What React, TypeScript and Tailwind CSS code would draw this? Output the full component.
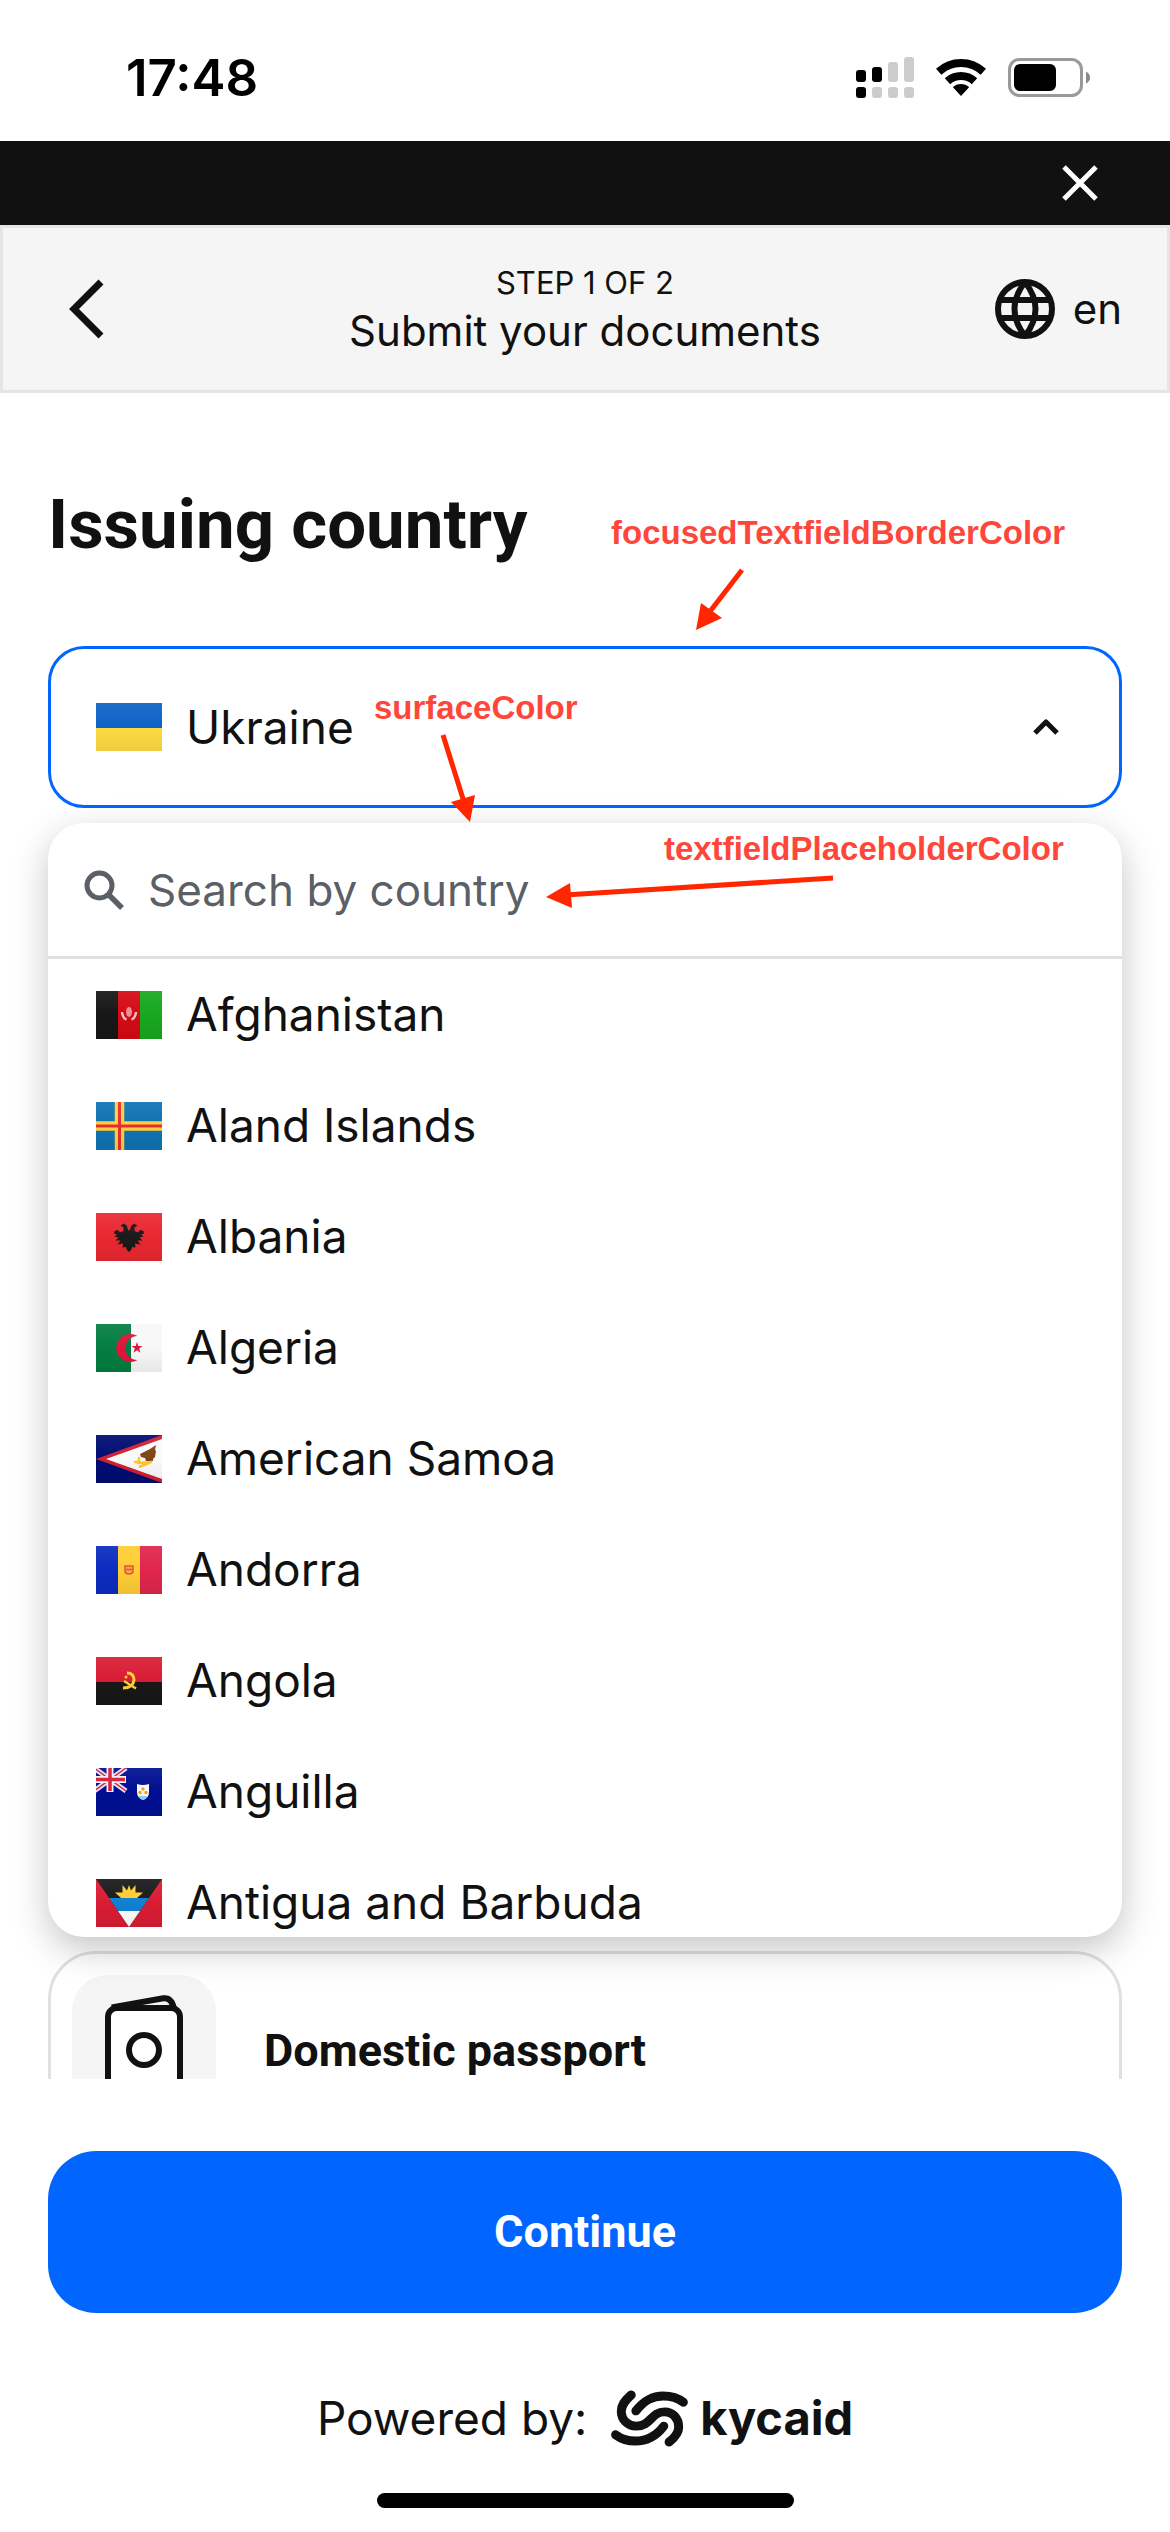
import type { ReactNode } from "react";

const sans = "font-['Inter',sans-serif]";
const display = "font-['Roboto',sans-serif]";

function Flag({ children }: { children: ReactNode }) {
  return (
    <svg viewBox="0 0 66 48" className="h-12 w-[66px] shrink-0" aria-hidden="true">
      <defs>
        <linearGradient id="flag-shade" x1="0" y1="0" x2="0" y2="1">
          <stop offset="0" stopColor="#fff" stopOpacity="0.07" />
          <stop offset="0.5" stopColor="#fff" stopOpacity="0" />
          <stop offset="0.5" stopColor="#000" stopOpacity="0" />
          <stop offset="1" stopColor="#000" stopOpacity="0.07" />
        </linearGradient>
      </defs>
      {children}
      <rect width="66" height="48" fill="url(#flag-shade)" />
    </svg>
  );
}

const ukraine = (
  <Flag>
    <rect width="66" height="25" fill="#0d63c6" />
    <rect y="25" width="66" height="23" fill="#ffdb42" />
  </Flag>
);

const countries: { name: string; flag: ReactNode }[] = [
  {
    name: "Afghanistan",
    flag: (
      <Flag>
        <rect width="22" height="48" fill="#171717" />
        <rect x="22" width="22" height="48" fill="#d50a14" />
        <rect x="44" width="22" height="48" fill="#18a81e" />
        <ellipse cx="33" cy="21" rx="3" ry="5" fill="#fff" opacity="0.55" />
        <path d="M26 21q.5 6 4.500 7.500M40 21q-.5 6-4.500 7.500" fill="none" stroke="#fff" strokeOpacity="0.75" strokeWidth="2.500" />
      </Flag>
    ),
  },
  {
    name: "Aland Islands",
    flag: (
      <Flag>
        <rect width="66" height="48" fill="#1073b2" />
        <path d="M23.500 0V48M0 24H66" stroke="#ffd13a" strokeWidth="9.500" />
        <path d="M23.500 0V48M0 24H66" stroke="#e62c33" strokeWidth="3" />
      </Flag>
    ),
  },
  {
    name: "Albania",
    flag: (
      <Flag>
        <rect width="66" height="48" fill="#ea2831" />
        <path
          d="M33 18L34.500 15.500L35 13L38 10.500L41.500 12.500L38.500 14.500L38.500 18L42 19.500L44 17L47.500 18L48 20.500L45 21.500L47.500 23.500L43.500 24.500L46.500 27.500L41.500 27.500L44.500 31.500L39 30.500L39.500 34.500L36 34L35.500 36.500L33 39L30.500 36.500L30 34L26.500 34.500L27 30.500L21.500 31.500L24.500 27.500L19.500 27.500L22.500 24.500L18.500 23.500L21 21.500L18 20.500L18.500 18L22 17L24 19.500L27.500 18L27.500 14.500L24.500 12.500L28 10.500L31 13L31.500 15.500Z"
          fill="#1a1a1a"
        />
      </Flag>
    ),
  },
  {
    name: "Algeria",
    flag: (
      <Flag>
        <rect width="66" height="48" fill="#f8f8f8" />
        <rect width="35" height="48" fill="#037e42" />
        <path d="M41.500 12A14 14 0 1 0 41.500 36A12 12 0 1 1 41.500 12Z" fill="#e2143c" />
        <path d="M41 18l1.300 4 4.200 0-3.300 2.600 1.200 4.200-3.400-2.500-3.400 2.500 1.200-4.200-3.300-2.600 4.200 0z" fill="#e2143c" />
      </Flag>
    ),
  },
  {
    name: "American Samoa",
    flag: (
      <Flag>
        <rect width="66" height="48" fill="#000c72" />
        <path d="M0 24L66 0V48Z" fill="#cf2033" />
        <path d="M10 24L66 4V44Z" fill="#fafafa" />
        <path d="M44 19l10-5 6-4-1 5 1 1-1 6-2 2 0 2-7 0-1-3-4-1z" fill="#804414" />
        <path d="M38 27l5 0 0-5M41 28l15-1M43 32l12-5" fill="none" stroke="#ffc625" strokeWidth="2.500" />
      </Flag>
    ),
  },
  {
    name: "Andorra",
    flag: (
      <Flag>
        <rect width="22" height="48" fill="#0c2cc0" />
        <rect x="22" width="22" height="48" fill="#ffcd35" />
        <rect x="44" width="22" height="48" fill="#e0264c" />
        <path d="M29 20h8v5q0 3-4 3t-4-3z" fill="#ffa05a" stroke="#dd5a2c" strokeWidth="1.600" />
        <path d="M30 23.500h6" stroke="#dd5a2c" strokeWidth="1.400" />
      </Flag>
    ),
  },
  {
    name: "Angola",
    flag: (
      <Flag>
        <rect width="66" height="25" fill="#d91c35" />
        <rect y="25" width="66" height="23" fill="#171717" />
        <path d="M31 16q7 0 7 7-1 8-11 8" fill="none" stroke="#ffce37" strokeWidth="3" />
        <path d="M28 24l12 7.500" stroke="#ffce37" strokeWidth="2.500" />
        <circle cx="30" cy="20" r="1.500" fill="#ffce37" />
      </Flag>
    ),
  },
  {
    name: "Anguilla",
    flag: (
      <Flag>
        <rect width="66" height="48" fill="#000f92" />
        <path d="M-2 0L30 23M30 0L-2 23" stroke="#e8e8f4" strokeWidth="5" />
        <path d="M-2 0L30 23M30 0L-2 23" stroke="#dc1c3a" strokeWidth="1.500" />
        <path d="M14 0V24M0 11.500H30" stroke="#f2f2fa" strokeWidth="7" />
        <path d="M14 0V23M0 11.500H29" stroke="#dc1c3a" strokeWidth="3.500" />
        <path d="M41 16q6 2 12 0v8q0 6-6 8-6-2-6-8z" fill="#fafafa" />
        <path d="M42 28h10q-2 3-5 4-3-1-5-4z" fill="#8fd0f0" />
        <circle cx="47" cy="21" r="1.700" fill="#ff9d14" />
        <circle cx="44" cy="24.500" r="1.700" fill="#ff9d14" />
        <circle cx="50" cy="24.500" r="1.700" fill="#ff9d14" />
      </Flag>
    ),
  },
  {
    name: "Antigua and Barbuda",
    flag: (
      <Flag>
        <rect width="66" height="48" fill="#d91c33" />
        <path d="M0 0H66L33 48Z" fill="#1a1a1a" />
        <path d="M25 19L19 13.500L26.500 13.500L26.500 6L31 11.500L33 6L35 11.500L39.500 6L39.500 13.500L47 13.500L41 19Z" fill="#ffcc33" />
        <path d="M13 19H53L44 32H22Z" fill="#1180d0" />
        <path d="M22 32H44L33 48Z" fill="#fff" />
      </Flag>
    ),
  },
];

function StatusBar() {
  const upper = ["h-3 bg-black", "h-[15px] bg-black", "h-5 bg-[#ccc]", "h-[25px] bg-[#ccc]"];
  const lower = ["bg-black", "bg-[#ccc]", "bg-[#ccc]", "bg-[#ccc]"];
  return (
    <div className="flex h-[141px] shrink-0 items-center justify-between pl-[126px] pr-[79px] pt-[14px]">
      <span className="text-[51px] leading-none font-semibold text-black">17:48</span>
      <div className="flex items-center">
        <div className="flex flex-col gap-[5px]">
          <div className="flex h-[25px] items-end gap-1.5">
            {upper.map((c, i) => (
              <span key={i} className={`w-2.5 rounded-[3px] ${c}`} />
            ))}
          </div>
          <div className="flex gap-1.5">
            {lower.map((c, i) => (
              <span key={i} className={`h-[11px] w-2.5 rounded-[3px] ${c}`} />
            ))}
          </div>
        </div>
        <svg viewBox="0 0 50 37" className="ml-[22px] h-[37px] w-[50px]" aria-hidden="true">
          <path d="M2.700 12.700A33 33 0 0 1 47.300 12.700" fill="none" stroke="#000" strokeWidth="8" />
          <path d="M11.500 22.300A20 20 0 0 1 38.500 22.300" fill="none" stroke="#000" strokeWidth="8" />
          <path d="M25 37L16.900 28.150A12 12 0 0 1 33.100 28.150Z" />
        </svg>
        <svg viewBox="0 0 83 39" className="ml-[22px] h-[39px] w-[83px]" aria-hidden="true">
          <rect x="1.500" y="1.500" width="72" height="36" rx="10" fill="none" stroke="#999" strokeWidth="3" />
          <rect x="6" y="6" width="42" height="27" rx="6" />
          <path d="M78 13.500Q82 15.500 82 19.500T78 25.500Z" fill="#8a8a8a" />
        </svg>
      </div>
    </div>
  );
}

function Header() {
  return (
    <header className="grid h-[168px] shrink-0 grid-cols-[1fr_auto_1fr] items-center border-[3px] border-[#e4e6e6] bg-[#f5f5f5] px-[45px]">
      <button type="button" aria-label="Back" className="ml-[18px] justify-self-start">
        <svg viewBox="0 0 40 60" className="h-[60px] w-10" fill="none" stroke="#111" strokeWidth="7">
          <path d="M35 3L8 30L35 57" />
        </svg>
      </button>
      <div className="text-center text-[#111]">
        <p className="text-[31px] leading-[44px]">STEP 1 OF 2</p>
        <p className="text-[42px] leading-[52px]">Submit your documents</p>
      </div>
      <button type="button" className="flex items-center gap-[18px] justify-self-end text-[42px] leading-[52px] text-[#111]">
        <svg viewBox="0 0 60 60" className="size-[60px]" fill="none" stroke="#111" strokeWidth="6" aria-hidden="true">
          <circle cx="30" cy="30" r="27" />
          <path d="M5 21H55M5 39H55M30 3C23 12 19.500 21 19.500 30S23 48 30 57M30 3C37 12 40.500 21 40.500 30S37 48 30 57" />
        </svg>
        en
      </button>
    </header>
  );
}

function CountrySelect() {
  return (
    <>
      <button
        type="button"
        aria-haspopup="listbox"
        aria-expanded="true"
        aria-labelledby="country-title"
        className="flex h-[162px] w-full items-center gap-6 rounded-[36px] border-[3px] border-[#06f] pl-[45px] pr-[60px] text-[46px] text-[#111]"
      >
        {ukraine}
        <span className="flex-1 text-left">Ukraine</span>
        <svg viewBox="0 0 26 16" className="h-4 w-[26px]" fill="none" stroke="#111" strokeWidth="5" strokeLinejoin="round" aria-hidden="true">
          <path d="M2 14L13 3L24 14" />
        </svg>
      </button>
      <div className="relative z-10 mt-[15px] h-[1114px] overflow-hidden rounded-[36px] bg-white shadow-[0_12px_36px_rgba(0,0,0,0.23)]">
        <label className="flex h-[136px] items-center gap-6 border-b-[3px] border-[#e0e0e0] pl-9 pr-9">
          <svg viewBox="0 0 40 40" className="size-10 shrink-0" fill="none" stroke="#5b5f66" aria-hidden="true">
            <circle cx="15.500" cy="15.500" r="12.500" strokeWidth="5" />
            <path d="M25 25L38 38" strokeWidth="5.500" />
          </svg>
          <input
            type="text"
            aria-label="Search by country"
            placeholder="Search by country"
            className="min-w-0 flex-1 text-[44px] outline-none placeholder:text-[#5b5f66] placeholder:opacity-100"
          />
        </label>
        <ul role="listbox" aria-labelledby="country-title">
          {countries.map(({ name, flag }) => (
            <li key={name} role="option" aria-selected="false" className="flex h-[111px] items-center gap-6 pl-12 text-[46px] text-[#111]">
              {flag}
              {name}
            </li>
          ))}
        </ul>
      </div>
    </>
  );
}

function DocumentCard() {
  return (
    <button type="button" className="mt-3.5 flex w-full shrink-0 items-center gap-12 rounded-[48px] border-[3px] border-[#e0e0e0] p-[21px]">
      <span className="flex h-[152px] w-36 items-start justify-center rounded-[36px] bg-[#f5f5f5] pt-5">
        <svg viewBox="195 195 234 312" className="h-[104px] w-[78px]" fill="none" stroke="#111" strokeWidth="18" aria-hidden="true">
          <path d="M215 232L370 205Q396 202 402 238" />
          <rect x="204" y="234" width="216" height="264" rx="26" fill="#fff" />
          <circle cx="312" cy="360" r="45" />
        </svg>
      </span>
      <span className={`text-[45px] leading-[48px] font-bold text-[#111] ${display}`}>Domestic passport</span>
    </button>
  );
}

function Footer() {
  return (
    <footer className="shrink-0 bg-white px-12 pb-6 pt-[72px]">
      <button type="button" className={`h-[162px] w-full rounded-[48px] bg-[#06f] text-[45px] font-bold text-white ${display}`}>
        Continue
      </button>
      <div className="mt-[76px] flex h-[58px] items-center justify-center text-[#111]">
        <span className="text-[46px]">Powered by:</span>
        <svg viewBox="27 59 232 170" className="ml-6 h-[57px] w-[77px]" fill="none" stroke="#111" strokeWidth="27" strokeLinecap="round" aria-hidden="true">
          <path d="M88 73C66 93 58 105 58 122C58 148 78 167 103 167C147 167 148 124 188 124C214 124 231 144 231 170C231 186 220 200 202 215" />
          <path d="M102 121C128 88 152 76 184 76C210 76 230 83 245 95" />
          <path d="M186 167C160 202 132 212 100 212C74 212 56 204 41 193" />
        </svg>
        <span className="ml-3 text-[47px] font-bold">kycaid</span>
      </div>
      <div className="mx-auto mt-[46px] h-[15px] w-[417px] rounded-full bg-black" />
    </footer>
  );
}

function Annotations() {
  return (
    <div className="font-['Liberation_Sans',sans-serif] text-[33px] leading-10 font-bold text-[#ff463a]">
      <span className="absolute top-[120px] left-[611px] z-20">focusedTextfieldBorderColor</span>
      <svg viewBox="690 565 60 70" className="absolute top-[172px] left-[690px] z-20 h-[70px] w-[60px]" fill="#ff2600" aria-hidden="true">
        <path d="M742 570L708 614" stroke="#ff2600" strokeWidth="5" />
        <path d="M696 630L701 603L722 618Z" />
      </svg>
      <span className="absolute top-[295px] left-[374px] z-20">surfaceColor</span>
      <svg viewBox="435 730 45 95" className="absolute top-[337px] left-[435px] z-20 h-[95px] w-[45px]" fill="#ff2600" aria-hidden="true">
        <path d="M443 735L464 802" stroke="#ff2600" strokeWidth="5" />
        <path d="M470 822L451 802L475 795Z" />
      </svg>
      <span className="absolute top-[436px] left-[664px] z-20">textfieldPlaceholderColor</span>
      <svg viewBox="540 870 300 40" className="absolute top-[477px] left-[540px] z-20 h-10 w-[300px]" fill="#ff2600" aria-hidden="true">
        <path d="M833 878L565 895" stroke="#ff2600" strokeWidth="5" />
        <path d="M546 897L570 883L572 908Z" />
      </svg>
    </div>
  );
}

export default function App() {
  return (
    <div className={`flex h-screen flex-col bg-white ${sans}`}>
      <StatusBar />
      <div className="flex h-[84px] shrink-0 items-center justify-end bg-[#111] pr-[70px]">
        <button type="button" aria-label="Close">
          <svg viewBox="0 0 40 40" className="size-10" stroke="#fff" strokeWidth="5">
            <path d="M4 4L36 36M36 4L4 36" />
          </svg>
        </button>
      </div>
      <Header />
      <main className="relative min-h-0 flex-1 overflow-hidden px-12 pt-[92px]">
        <h1 id="country-title" className={`mb-[81px] text-[69px] leading-[80px] font-bold text-[#111] ${display}`}>
          Issuing country
        </h1>
        <CountrySelect />
        <DocumentCard />
        <Annotations />
      </main>
      <Footer />
    </div>
  );
}
